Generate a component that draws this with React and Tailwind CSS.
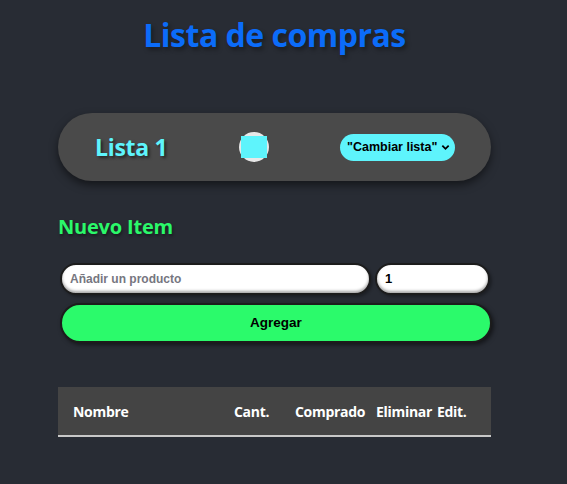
export default function App() {
  return (
    <div className="min-h-[484px] w-full bg-[#282c34] font-['Open_Sans',sans-serif]">
      <div className="w-[549px]">
        <h1 className="pt-[13px] text-center text-[32px] font-bold leading-[44px] tracking-[-0.5px] text-[#0b6cf9] [text-shadow:2px_3px_4px_rgba(0,0,0,0.35)]">
          Lista de compras
        </h1>
      </div>

      <div className="ml-[58px] w-[433px]">
        {/* Lista activa */}
        <div className="mt-[56px] flex h-[68px] items-center rounded-[34px] bg-[#4a4a4a] pl-[37px] pr-[36px] shadow-[0_4px_8px_rgba(0,0,0,0.5)]">
          <h2 className="w-[144px] text-[23px] font-bold tracking-[-0.3px] text-[#5ef4fc] [text-shadow:2px_2px_3px_rgba(0,0,0,0.5)]">
            Lista 1
          </h2>
          <div className="flex h-[30px] w-[30px] items-center justify-center rounded-full bg-[#e8e8e8]">
            <div className="h-[22px] w-[26px] bg-[#5ef4fc]" />
          </div>
          <div className="ml-auto flex h-[27px] w-[115px] items-center justify-between rounded-full bg-[#5ef4fc] pl-[7px] pr-[5px] font-['Liberation_Sans',sans-serif] text-[12.5px] font-bold text-black">
            <span>"Cambiar lista"</span>
            <svg width="9" height="9" viewBox="0 0 10 10">
              <path d="M1.5 3 L5 6.5 L8.5 3" fill="none" stroke="black" strokeWidth="2" />
            </svg>
          </div>
        </div>

        {/* Nuevo item */}
        <h3 className="mt-[32px] text-[20px] font-bold leading-[28px] tracking-[-0.2px] text-[#2bf86a] [text-shadow:1px_2px_3px_rgba(0,0,0,0.4)]">
          Nuevo Item
        </h3>

        <div className="mt-[22px] flex gap-[4px] pl-[2px] font-['Liberation_Sans',sans-serif]">
          <div className="flex h-[32px] w-[311px] items-center rounded-full border-2 border-[#1c1c1c] bg-white pl-[8px] text-[12px] font-bold text-[#767680] shadow-[inset_0_-2px_3px_rgba(0,0,0,0.35),2px_2px_3px_rgba(0,0,0,0.3)]">
            Añadir un producto
          </div>
          <div className="flex h-[32px] w-[115px] items-center rounded-full border-2 border-[#1c1c1c] bg-white pl-[8px] text-[13px] font-bold text-black shadow-[inset_0_-2px_3px_rgba(0,0,0,0.35),2px_2px_3px_rgba(0,0,0,0.3)]">
            1
          </div>
        </div>

        <div className="ml-[2px] mt-[8px] flex h-[40px] w-[432px] items-center justify-center rounded-full border-2 border-[#1c1c1c] bg-[#2bfa6b] font-['Liberation_Sans',sans-serif] text-[13.5px] font-bold text-black shadow-[2px_2px_4px_rgba(0,0,0,0.5)]">
          Agregar
        </div>

        {/* Tabla */}
        <div className="mt-[44px] flex h-[50px] items-center border-b-2 border-[#c8c8c8] bg-[#444444] text-[14px] font-bold tracking-[-0.3px] text-white">
          <span className="ml-[15px] w-[161px]">Nombre</span>
          <span className="w-[61px]">Cant.</span>
          <span className="w-[81px]">Comprado</span>
          <span className="w-[61px]">Eliminar</span>
          <span>Edit.</span>
        </div>
      </div>
    </div>
  );
}
